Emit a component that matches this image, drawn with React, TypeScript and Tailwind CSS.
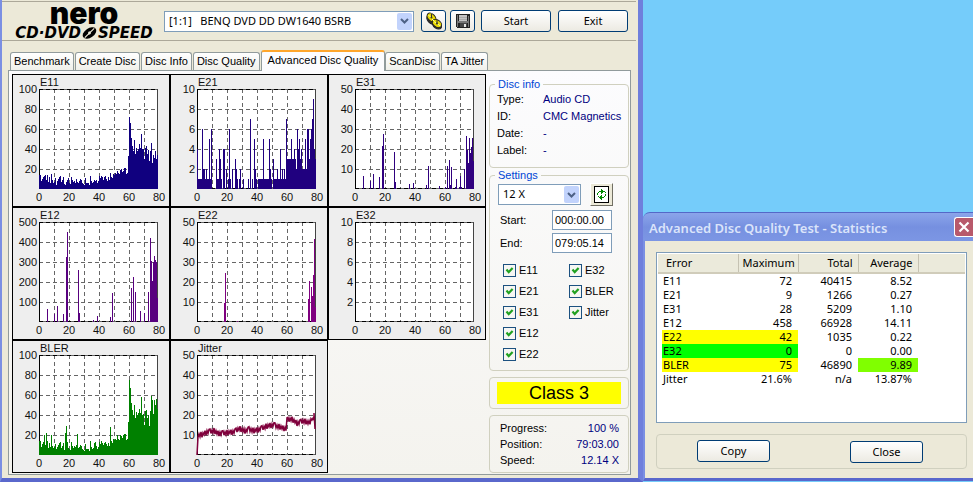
import React from "react"
import clsx from "clsx"

type Sparse = [number, number][]

const fill = (pairs: Sparse) => {
  const out: number[] = Array(119).fill(0)
  pairs.forEach(([i, v]) => (out[i] = v))
  return out
}

const E11 = [
  14, 14, 8, 10, 12, 13, 14, 9, 14, 7, 12, 6, 15, 9, 6, 7, 11, 4, 8, 10, 12, 13, 7, 9, 12, 5, 4, 7, 9, 11,
  6, 5, 12, 9, 7, 8, 6, 10, 7, 6, 8, 10, 9, 6, 5, 4, 11, 6, 6, 6, 4, 13, 8, 6, 7, 9, 8, 9, 6, 8,
  13, 11, 13, 12, 9, 12, 13, 10, 8, 12, 9, 16, 12, 11, 15, 14, 16, 15, 18, 16, 15, 19, 20, 17, 18, 21, 21, 15, 16, 33,
  72, 66, 51, 43, 38, 49, 35, 41, 38, 40, 45, 41, 55, 40, 40, 30, 41, 43, 35, 39, 28, 38, 46, 26, 34, 31, 38, 30, 34,
]

const E21 = [
  4, 1, 1, 1, 1, 6, 2, 2, 1, 2, 1, 1, 5, 1, 6, 0, 0, 0, 0, 3, 1, 1, 4, 3, 1, 0, 4, 4, 0, 2,
  0, 1, 6, 1, 0, 2, 0, 0, 3, 2, 1, 0, 1, 2, 0, 0, 1, 0, 0, 0, 0, 1, 0, 7, 0, 1, 0, 5, 2, 1,
  0, 1, 1, 1, 1, 1, 5, 1, 1, 1, 1, 1, 5, 2, 1, 0, 3, 1, 1, 1, 2, 1, 1, 4, 1, 2, 1, 2, 1, 7,
  3, 3, 3, 3, 5, 3, 3, 4, 3, 2, 6, 4, 5, 3, 4, 2, 2, 2, 5, 2, 6, 6, 3, 5, 6, 7, 9, 4, 3,
]

const E31 = fill([
  [8, 6.5], [15, 4], [18, 7.5], [24, 6], [27, 21.5], [28, 27.5], [39, 18.5], [40, 3.5], [54, 2.5], [58, 3],
  [71, 2], [73, 11.5], [84, 1.5], [90, 1], [92, 11.5], [94, 14.5], [95, 2], [96, 11], [100, 1], [101, 5],
  [104, 1], [105, 6.5], [106, 1], [109, 10], [111, 26.5], [112, 19.5], [113, 13], [114, 25.5], [115, 18],
  [116, 21], [117, 25.5], [118, 14],
])

const E12 = fill([
  [8, 65], [15, 40], [18, 80], [24, 40], [27, 325], [28, 450], [39, 260], [40, 45], [54, 10], [58, 30],
  [71, 25], [73, 145], [92, 170], [94, 225], [96, 150], [101, 55], [105, 45], [109, 150], [111, 420],
  [112, 305], [113, 205], [114, 300], [115, 330], [116, 310], [117, 300], [118, 120],
])

const E22 = fill([
  [27, 9.5], [28, 24.5], [40, 0.5], [111, 11.5], [112, 20.5], [114, 17.5], [115, 13], [116, 23.5],
  [117, 41.5], [118, 7.5],
])

const BLER = [
  14, 14, 8, 11, 13, 20, 10, 22, 14, 7, 12, 8, 20, 9, 7, 8, 11, 6, 8, 10, 12, 13, 7, 9, 12, 5, 22, 29, 13, 7,
  6, 5, 13, 9, 7, 9, 8, 10, 21, 7, 8, 10, 9, 6, 5, 4, 11, 6, 6, 6, 4, 14, 8, 6, 7, 12, 13, 9, 6, 8,
  13, 11, 14, 12, 10, 12, 13, 11, 9, 12, 9, 28, 14, 12, 16, 15, 16, 15, 20, 16, 15, 20, 19, 17, 20, 21, 21, 15, 16, 33,
  75, 67, 52, 45, 40, 50, 37, 43, 40, 42, 46, 42, 58, 40, 41, 30, 44, 45, 37, 40, 29, 44, 59, 55, 41, 55, 50, 56, 46,
]

const JITTER_TREND: Sparse = [
  [1, 10], [5, 10], [10, 11.7], [17, 12], [20, 11], [30, 11], [38, 12], [42, 13.2], [47, 12], [52, 13],
  [57, 12], [65, 13.5], [70, 14.3], [76, 15.3], [82, 14], [89, 13.2], [90, 17.5], [94, 18], [100, 16],
  [106, 17], [112, 16], [115, 18.500], [118, 15],
]

const NOISE = [1.2, -1.1, 0.6, -0.9, 1.500, -1.2, 0.8, -0.6, 1.2, -1.500, 0.5, -1, 1.1]

const jitterPath = () => {
  let d = "M26 114"
  for (let i = 0; i < JITTER_TREND.length - 1; i++) {
    const [x0, v0] = JITTER_TREND[i]
    const [x1, v1] = JITTER_TREND[i + 1]
    for (let x = x0; x < x1; x++) {
      const v = v0 + ((v1 - v0) * (x - x0)) / (x1 - x0) + NOISE[x % NOISE.length]
      d += `L${26 + x} ${114 - v * 2}`
    }
  }
  return d + "L143 72L144 88"
}

type ChartProps = {
  title: string
  max: number
  color: string
  data?: number[]
  path?: string
}

const charts: ChartProps[] = [
  { title: "E11", max: 100, color: "#10007f", data: E11 },
  { title: "E21", max: 10, color: "#20007f", data: E21 },
  { title: "E31", max: 50, color: "#30007f", data: E31 },
  { title: "E12", max: 500, color: "#58007f", data: E12 },
  { title: "E22", max: 50, color: "#7f007f", data: E22 },
  { title: "E32", max: 10, color: "#7f007f" },
  { title: "BLER", max: 100, color: "#008000", data: BLER },
  { title: "Jitter", max: 50, color: "#80003c", path: jitterPath() },
]

const Chart: React.FC<ChartProps> = ({ title, max, color, data, path }) => (
  <div className="border border-black bg-[#eeeeee]">
    <svg viewBox="0 0 156 131" className="block w-full" role="img" aria-label={title}>
      <g shapeRendering="crispEdges">
        <rect x={26} y={14} width={119} height={100} fill="#fff" />
        {[1, 2, 3, 4].map((i) => (
          <path key={i} d={`M26 ${14.5 + i * 20}H144`} stroke="#666" strokeDasharray="4 3" />
        ))}
        {[1, 2, 3, 4, 5, 6, 7].map((i) => (
          <path key={i} d={`M${26.5 + i * 15} 14V114`} stroke="#666" strokeDasharray="4 3" />
        ))}
        <path d="M26 14.5H145M26 113.5H145" stroke="#666" />
        <path d="M26 14.5H145M26 113.5H145" stroke="#000" strokeDasharray="4 3" />
        <path d="M144.5 14V114" stroke="#444" />
        <path d="M26.5 14V114" stroke="#000" />
        {data?.map((v, i) => {
          const h = Math.round((v / max) * 100)
          return h > 0 && <rect key={i} x={26 + i} y={114 - h} width={1} height={h} fill={color} />
        })}
      </g>
      {path && <path d={path} fill="none" stroke={color} strokeWidth={1.5} />}
      <g fontSize={11} fill="#111">
        <text x={27} y={11}>{title}</text>
        {[5, 4, 3, 2, 1].map((i) => (
          <text key={i} x={24} y={118 - i * 20} textAnchor="end">{(max / 5) * i}</text>
        ))}
        {[0, 20, 40, 60, 80].map((v) => (
          <text key={v} x={26 + v * 1.5} y={126} textAnchor="middle">{v}</text>
        ))}
      </g>
    </svg>
  </div>
)

const XpButton: React.FC<React.ComponentProps<"button">> = ({ className, ...rest }) => (
  <button
    className={clsx(
      "flex h-[22px] items-center justify-center rounded-[3px] border border-[#003c74] bg-gradient-to-b from-white to-[#eceae2] font-['Noto_Sans'] text-[11px] leading-4",
      className
    )}
    {...rest}
  />
)

const XpSelect: React.FC<React.ComponentProps<"select">> = ({ className, ...rest }) => (
  <div className={clsx("relative h-[21px]", className)}>
    <select
      className="h-full w-full appearance-none border border-[#7f9db9] bg-white pl-1 font-['Noto_Sans'] text-[11px]"
      {...rest}
    />
    <span className="pointer-events-none absolute inset-y-0.5 right-0.5 flex w-[15px] items-center justify-center rounded-[2px] bg-[#c2d3fc]">
      <svg width="9" height="6" viewBox="0 0 9 6">
        <path d="M1 1l3.5 3.5L8 1" fill="none" stroke="#4d6185" strokeWidth="2" />
      </svg>
    </span>
  </div>
)

const Check: React.FC<{ label: string }> = ({ label }) => (
  <label className="flex h-[21px] items-center gap-[3px]">
    <span className="relative h-[13px] w-[13px]">
      <input type="checkbox" defaultChecked className="peer block h-[13px] w-[13px] appearance-none border border-[#1c5180] bg-[#f6f6f3]" />
      <svg viewBox="0 0 13 13" className="pointer-events-none absolute inset-0 hidden peer-checked:block">
        <path d="M3.5 5.5l2.2 2.6L9.6 4" fill="none" stroke="#21a121" strokeWidth="2.2" />
      </svg>
    </span>
    {label}
  </label>
)

const Group: React.FC<{ title: string; className?: string; children: React.ReactNode }> = ({ title, className, children }) => (
  <fieldset className={clsx("rounded-[4px] border border-[#d0d0bf]", className)}>
    <legend className="ml-[5px] px-[3px] leading-[14px] text-[#0046d5]">{title}</legend>
    {children}
  </fieldset>
)

const Logo = () => (
  <div className="flex w-[150px] flex-col items-center text-black">
    <span className="h-[23px] font-['Inter'] text-[30px] font-black leading-5">nero</span>
    <span className="flex items-center font-['DejaVu_Sans'] text-[15px] font-bold italic leading-[14px]">
      CD·DVD
      <svg width="17" height="14" viewBox="0 0 18 14">
        <ellipse cx="9" cy="7" rx="8" ry="5" transform="rotate(-35 9 7)" />
        <path d="M4 12L14 2M8 8.500l2-3" stroke="#ece9d8" strokeWidth="1.200" />
        <circle cx="9" cy="7" r="1.500" fill="#ece9d8" />
      </svg>
      SPEED
    </span>
  </div>
)

const DiscsIcon = () => (
  <svg width="18" height="18" viewBox="0 0 18 18">
    <g stroke="#222" strokeWidth="1">
      <ellipse cx="6.500" cy="7.500" rx="5.500" ry="3.800" transform="rotate(45 6.500 7.500)" fill="#333" />
      <ellipse cx="6.500" cy="5.500" rx="5.200" ry="3.500" transform="rotate(45 6.500 5.500)" fill="#e8d800" />
      <ellipse cx="12" cy="13.200" rx="5" ry="3.200" transform="rotate(35 12 13.200)" fill="#333" />
      <ellipse cx="12" cy="11.500" rx="5" ry="3.500" transform="rotate(35 12 11.500)" fill="#e8d800" />
    </g>
    <path d="M3.500 3l2 2M12.500 12l3 2M7 7l2 2M9 9.500l2 1.500" stroke="#ffffa0" />
    <path d="M6.500 2v3.500M12 8v3.500" stroke="#333" />
    <circle cx="6.500" cy="5.500" r="1" fill="#333" />
    <circle cx="12" cy="11.500" r="1" fill="#333" />
  </svg>
)

const FloppyIcon = () => (
  <svg width="14" height="14" viewBox="0 0 14 14" shapeRendering="crispEdges">
    <path d="M0 0h14v14H1L0 13z" fill="#222" />
    <path d="M1 1h1v12H1zM12 2h1v11h-1zM2 7h10v2H2z" fill="#777" />
    <path d="M3 1h8v6H3z" fill="#c4c4c4" />
    <path d="M3 3h8v1H3zM3 5h8v1H3z" fill="#aaa" />
    <path d="M4 9h7v4H4z" fill="#444" />
    <path d="M8 10h2v3H8z" fill="#e4e4e4" />
  </svg>
)

const RefreshIcon = () => (
  <svg width="15" height="17" viewBox="0 0 15 17" shapeRendering="crispEdges">
    <rect x=".5" y=".5" width="14" height="16" fill="#fff" stroke="#000" />
    <g fill="#008a00">
      <path d="M7 3h1v1h1v1h1v1H9v1H8v1H7zM5 5h2v1H5zM4 6h1v1H4zM3 7h1v2H3z" />
      <path d="M8 14H7v-1H6v-1H5v-1h1v-1h1V9h1zM8 11h2v1H8zM10 10h1v1h-1zM11 8h1v2h-1zM10 5h1v1h-1zM11 6h1v1h-1zM4 10h1v1H4z" />
    </g>
  </svg>
)

const tabs = ["Benchmark", "Create Disc", "Disc Info", "Disc Quality", "Advanced Disc Quality", "ScanDisc", "TA Jitter"]

const discInfo = [
  ["Type:", "Audio CD"],
  ["ID:", "CMC Magnetics"],
  ["Date:", "-"],
  ["Label:", "-"],
]

const progress = [
  ["Progress:", "100 %"],
  ["Position:", "79:03.00"],
  ["Speed:", "12.14 X"],
]

const stats = [
  { row: ["E11", "72", "40415", "8.52"] },
  { row: ["E21", "9", "1266", "0.27"] },
  { row: ["E31", "28", "5209", "1.10"] },
  { row: ["E12", "458", "66928", "14.11"] },
  { row: ["E22", "42", "1035", "0.22"], bg: "bg-[#ffff00]" },
  { row: ["E32", "0", "0", "0.00"], bg: "bg-[#00ff00]" },
  { row: ["BLER", "75", "46890", "9.89"], bg: "bg-[#ffff00]", avgBg: "bg-[#80ff00]" },
  { row: ["Jitter", "21.6%", "n/a", "13.87%"] },
]

const MainWindow = () => (
  <main className="min-w-0 flex-1 border-b-4 border-l-2 border-r-[5px] border-b-[#5a68cc] border-l-[#7b8fe3] border-r-[#6f7fdc] bg-[#ece9d8] pb-[3px] pt-px">
    <header className="mr-0.5 flex h-10 items-center border-y border-[#aca899] pl-[7px] pr-2">
      <Logo />
      <XpSelect className="ml-[5px] min-w-0 flex-1" aria-label="Drive">
        <option>[1:1]&nbsp;&nbsp; BENQ DVD DD DW1640 BSRB</option>
      </XpSelect>
      <div className="ml-[7px] flex gap-1">
        <XpButton className="w-[25px]" aria-label="Copy disc"><DiscsIcon /></XpButton>
        <XpButton className="w-[25px]" aria-label="Save"><FloppyIcon /></XpButton>
      </div>
      <div className="ml-1.5 flex gap-[7px]">
        <XpButton className="w-[70px]">Start</XpButton>
        <XpButton className="w-[70px]">Exit</XpButton>
      </div>
    </header>

    <div role="tablist" className="ml-2 flex h-[29px] items-end">
      {tabs.map((tab) => {
        const active = tab === "Advanced Disc Quality"
        return (
          <button
            key={tab}
            role="tab"
            aria-selected={active}
            className={clsx(
              "whitespace-nowrap rounded-t-[3px] border border-b-0 border-[#919b9c]",
              active
                ? "relative -mb-px h-[21px] border-t-2 border-t-[#ffa62b] bg-[#fcfcfe] px-1.5 pb-1"
                : "mr-px h-[18px] bg-gradient-to-b from-white to-[#f0f0ea] px-[3px]"
            )}
          >
            {tab}
          </button>
        )
      })}
    </div>

    <div className="ml-1.5 mr-[7px] flex items-start gap-[3px] border border-[#919b9c] bg-gradient-to-b from-[#fcfcfe] to-[#f4f3ee] pb-px pl-[3px] pr-px pt-[3px]">
      <section className="grid min-w-0 flex-1 grid-cols-3">
        {charts.map((c) => (
          <Chart key={c.title} {...c} />
        ))}
      </section>

      <aside className="flex w-[140px] shrink-0 flex-col pt-[3px]">
        <Group title="Disc info" className="pb-2">
          <dl className="grid grid-cols-[46px_1fr] pl-[7px] leading-[17px]">
            {discInfo.map(([k, v]) => (
              <React.Fragment key={k}>
                <dt>{k}</dt>
                <dd className="whitespace-nowrap text-[#000080]">{v}</dd>
              </React.Fragment>
            ))}
          </dl>
        </Group>

        <Group title="Settings" className="pb-[5px]">
          <div className="flex items-center gap-[9px] pl-2 pt-px">
            <XpSelect className="w-[83px]" aria-label="Speed">
              <option>12 X</option>
            </XpSelect>
            <button
              aria-label="Refresh"
              className="flex h-[23px] w-[23px] items-center justify-center border border-b-[#716f64] border-l-white border-r-[#716f64] border-t-white bg-[#ece9d8]"
            >
              <RefreshIcon />
            </button>
          </div>
          <div className="mt-1 grid grid-cols-[52px_60px] items-center gap-y-[3px] pl-2.5">
            <label htmlFor="start">Start:</label>
            <input id="start" defaultValue="000:00.00" className="h-5 border border-[#7f9db9] bg-white px-0.5" />
            <label htmlFor="end">End:</label>
            <input id="end" defaultValue="079:05.14" className="h-5 border border-[#7f9db9] bg-white px-0.5" />
          </div>
          <div className="mt-[7px] grid grid-flow-col grid-cols-[66px_1fr] grid-rows-5 pl-[13px]">
            {["E11", "E21", "E31", "E12", "E22", "E32", "BLER", "Jitter"].map((l) => (
              <Check key={l} label={l} />
            ))}
          </div>
        </Group>

        <div className="mt-1.5 rounded-[4px] border border-[#d0d0bf] px-[7px] py-1">
          <p className="bg-[#ffff00] text-center text-lg leading-[22px]">Class 3</p>
        </div>

        <dl className="mt-1.5 grid grid-cols-2 rounded-[4px] border border-[#d0d0bf] py-1 pl-2.5 pr-[9px] leading-4">
          {progress.map(([k, v]) => (
            <React.Fragment key={k}>
              <dt>{k}</dt>
              <dd className="text-right text-[#000080]">{v}</dd>
            </React.Fragment>
          ))}
        </dl>
      </aside>
    </div>
  </main>
)

const StatsWindow = () => (
  <section className="mb-px mt-auto w-[330px] shrink-0 font-['Noto_Sans']">
    <header className="flex h-[29px] items-center justify-between rounded-tl-[7px] border-t border-[#5468c8] bg-gradient-to-b from-[#8ba5ea] via-[#7690e0] to-[#7c96e4] pl-1.5">
      <h2 className="pt-1 text-[13px] font-semibold text-[#dbe4fa]">Advanced Disc Quality Test - Statistics</h2>
      <button aria-label="Close window" className="flex h-5 w-[19px] items-center justify-center rounded-l-[3px] border border-r-0 border-white bg-[#b8596b]">
        <svg width="12" height="12" viewBox="0 0 12 12">
          <path d="M1.500 1.500l9 9M10.500 1.500l-9 9" stroke="#fff" strokeWidth="2.200" />
        </svg>
      </button>
    </header>
    <div className="border-b-[3px] border-l-2 border-b-[#5a68cc] border-l-[#7b8fe3] bg-[#ece9d8] pb-[9px] pl-[11px] pr-1.5 pt-[11px]">
      <div className="h-[171px] border border-[#7f9db9] bg-white px-px pt-px">
        <table className="w-full table-fixed border-collapse text-[11px] leading-[14px]">
          <colgroup>
            <col className="w-1" />
            <col className="w-[76px]" />
            <col className="w-[60px]" />
            <col className="w-[60px]" />
            <col className="w-[60px]" />
            <col />
          </colgroup>
          <thead>
            <tr className="h-[19px] border-b-2 border-[#d0ccba] bg-[#ebeadb]">
              <th />
              {["Error", "Maximum", "Total", "Average"].map((h) => (
                <th key={h} className="border-r border-[#c5c2b2] pl-1 pr-[5px] text-right font-normal [&:nth-child(2)]:text-left">
                  {h}
                </th>
              ))}
              <th />
            </tr>
          </thead>
          <tbody>
            {stats.map(({ row, bg, avgBg }) => (
              <tr key={row[0]} className="h-3.5">
                <td />
                <td className={clsx("pl-px", bg)}>{row[0]}</td>
                <td className={clsx("pr-1.5 text-right", bg)}>{row[1]}</td>
                <td className="pr-1.5 text-right">{row[2]}</td>
                <td className={clsx("pr-1.5 text-right", avgBg)}>{row[3]}</td>
                <td />
              </tr>
            ))}
          </tbody>
        </table>
      </div>
      <div className="mt-[11px] flex h-[35px] justify-between rounded-[4px] border border-[#d0d0bf] py-[5px] pl-10 pr-[43px]">
        <XpButton className="w-[73px] self-start">Copy</XpButton>
        <XpButton className="w-[73px] self-end">Close</XpButton>
      </div>
    </div>
  </section>
)

const App: React.FC = () => (
  <div className="flex min-h-screen items-stretch bg-[#75ccfa] font-['Liberation_Sans',sans-serif] text-[11px] text-black">
    <MainWindow />
    <StatsWindow />
  </div>
)

export default App
